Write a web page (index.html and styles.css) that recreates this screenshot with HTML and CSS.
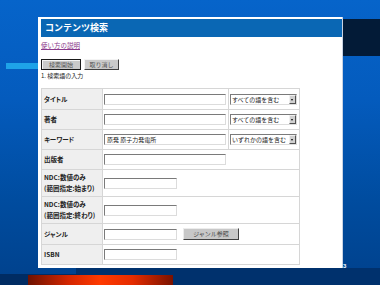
FILE: index.html
```html
<!DOCTYPE html>
<html lang="ja">
<head>
    <meta charset="UTF-8">
    <title>コンテンツ検索</title>
    <link rel="stylesheet" href="styles.css">
</head>
<body>
    <div class="slide">
        <div class="deco-dark"></div>
        <div class="deco-cyan"></div>
        <div class="deco-foot"></div>
        <div class="deco-foot-left"></div>
        <div class="deco-red"></div>

        <div class="shot">
            <div class="shot-title">コンテンツ検索</div>
            <a class="help" href="#">使い方の説明</a>
            <div class="actions">
                <button class="btn btn-default" type="button">検索開始</button>
                <button class="btn" type="button">取り消し</button>
            </div>
            <p class="step">1. 検索語の入力</p>

            <table class="form">
                <colgroup>
                    <col class="c-label">
                    <col class="c-input">
                    <col class="c-mode">
                </colgroup>
                <tr class="r-21">
                    <th>タイトル</th>
                    <td><input class="fld" type="text"></td>
                    <td><span class="sel"><span class="sel-text">すべての語を含む</span><span class="sel-btn"></span></span></td>
                </tr>
                <tr class="r-20">
                    <th>著者</th>
                    <td><input class="fld" type="text"></td>
                    <td><span class="sel"><span class="sel-text">すべての語を含む</span><span class="sel-btn"></span></span></td>
                </tr>
                <tr class="r-20">
                    <th>キーワード</th>
                    <td><input class="fld" type="text" value="原発 原子力発電所"></td>
                    <td><span class="sel"><span class="sel-text">いずれかの語を含む</span><span class="sel-btn"></span></span></td>
                </tr>
                <tr class="r-20">
                    <th>出版者</th>
                    <td colspan="2"><input class="fld" type="text"></td>
                </tr>
                <tr class="r-27">
                    <th>NDC:数値のみ<br>(範囲指定:始まり)</th>
                    <td colspan="2"><input class="fld fld-short" type="text"></td>
                </tr>
                <tr class="r-27">
                    <th>NDC:数値のみ<br>(範囲指定:終わり)</th>
                    <td colspan="2"><input class="fld fld-short" type="text"></td>
                </tr>
                <tr class="r-21">
                    <th>ジャンル</th>
                    <td colspan="2">
                        <div class="genre">
                            <input class="fld fld-short" type="text">
                            <button class="btn-genre" type="button">ジャンル参照</button>
                        </div>
                    </td>
                </tr>
                <tr class="r-20">
                    <th>ISBN</th>
                    <td colspan="2"><input class="fld fld-short" type="text"></td>
                </tr>
            </table>
        </div>

        <div class="page-no">3</div>
    </div>
</body>
</html>
```

FILE: styles.css
```css
* {
    box-sizing: border-box;
}

html,
body {
    margin: 0;
    padding: 0;
}

body {
    width: 380px;
    height: 285px;
    overflow: hidden;
    font-family: "Noto Sans CJK JP", "Noto Sans", sans-serif;
}

/* slide background */
.slide {
    position: relative;
    width: 380px;
    height: 285px;
    overflow: hidden;
    background: linear-gradient(180deg, #0664ca 0%, #045bbd 35%, #004c9f 70%, #00418c 100%);
}

.deco-dark {
    position: absolute;
    left: 342px;
    top: 19px;
    width: 38px;
    height: 37px;
    background: #031b37;
}

.deco-cyan {
    position: absolute;
    left: 6px;
    top: 63px;
    width: 34px;
    height: 6px;
    background: #1ea3e8;
}

.deco-foot {
    position: absolute;
    left: 76px;
    top: 268px;
    right: 0;
    bottom: 0;
    background: #00316d;
}

.deco-foot-left {
    position: absolute;
    left: 0;
    top: 274px;
    width: 80px;
    bottom: 0;
    background: #002c63;
}

.deco-red {
    position: absolute;
    left: 28px;
    top: 275px;
    width: 145px;
    height: 10px;
    background: linear-gradient(90deg, #6e1200 0%, #d42600 28%, #ff3a00 50%, #e52c00 72%, #7a1200 100%);
}

.page-no {
    position: absolute;
    left: 343px;
    top: 262px;
    font: bold 6px/8px "Liberation Sans", sans-serif;
    color: #fff;
}

/* screenshot of the search page */
.shot {
    position: absolute;
    left: 38px;
    top: 17px;
    width: 305px;
    height: 251px;
    padding: 2px 0 0 3px;
    background: #fff;
    border-right: 1px solid #c9d3e3;
}

.shot-title {
    height: 18px;
    padding-left: 4px;
    background: #0a67b4;
    color: #fff;
    font-size: 9px;
    font-weight: bold;
    line-height: 18px;
}

.help {
    display: block;
    width: max-content;
    margin-top: 3px;
    font-size: 6.5px;
    line-height: 11px;
    color: #8b3a8b;
}

.actions {
    display: flex;
    gap: 3px;
    margin-top: 8px;
    height: 11px;
}

.btn {
    width: 35px;
    height: 11px;
    padding: 0;
    font-family: inherit;
    font-size: 6px;
    line-height: 9px;
    color: #555;
    background: #cacaca;
    border: 1px solid;
    border-color: #f4f4f4 #404040 #404040 #f4f4f4;
}

.btn-default {
    width: 40px;
    border-color: #1a1a1a;
    box-shadow: inset 1px 1px 0 #f4f4f4;
}

.step {
    margin: 1px 0 0;
    font-size: 6px;
    line-height: 9px;
    color: #222;
}

/* form table */
.form {
    width: 258px;
    margin-top: 8px;
    border-collapse: collapse;
    table-layout: fixed;
    font-size: 6px;
    color: #222;
}

.c-label {
    width: 61px;
}

.c-input {
    width: 126px;
}

.c-mode {
    width: 71px;
}

.form th,
.form td {
    padding: 0 0 0 1px;
    border: 1px solid #d6d6d6;
    vertical-align: middle;
}

.form th {
    padding-left: 2px;
    background: #efefef;
    font-size: 6.5px;
    font-weight: bold;
    text-align: left;
    line-height: 11px;
    font-feature-settings: "palt";
}

.r-20 th,
.r-20 td {
    height: 20px;
}

.r-21 th,
.r-21 td {
    height: 21px;
}

.r-27 th,
.r-27 td {
    height: 27px;
}

.fld {
    display: block;
    width: 122px;
    height: 11px;
    margin: 0;
    padding: 0 2px;
    font-family: inherit;
    font-size: 6px;
    color: #222;
    background: #fff;
    border: 1px solid;
    border-color: #7a7a7a #dcdcdc #dcdcdc #7a7a7a;
}

.fld-short {
    width: 73px;
}

.sel {
    display: flex;
    width: 67px;
    height: 11px;
    border: 1px solid;
    border-color: #7a7a7a #dcdcdc #dcdcdc #7a7a7a;
    background: #fff;
    overflow: hidden;
}

.sel-text {
    flex: 1;
    padding-left: 1px;
    overflow: hidden;
    white-space: nowrap;
    font-size: 6px;
    line-height: 9px;
}

.sel-btn {
    position: relative;
    width: 7px;
    background: #d0d0d0;
    border: 1px solid;
    border-color: #f0f0f0 #505050 #505050 #f0f0f0;
}

.sel-btn::after {
    content: "";
    position: absolute;
    left: 1px;
    top: 3px;
    border-left: 1.5px solid transparent;
    border-right: 1.5px solid transparent;
    border-top: 2px solid #000;
}

.genre {
    display: flex;
    align-items: center;
    gap: 6px;
}

.btn-genre {
    width: 56px;
    height: 12px;
    padding: 0;
    font-family: inherit;
    font-size: 6px;
    line-height: 10px;
    color: #444;
    background: #c8c8c8;
    border: 1px solid;
    border-color: #ececec #404040 #404040 #ececec;
}
```
